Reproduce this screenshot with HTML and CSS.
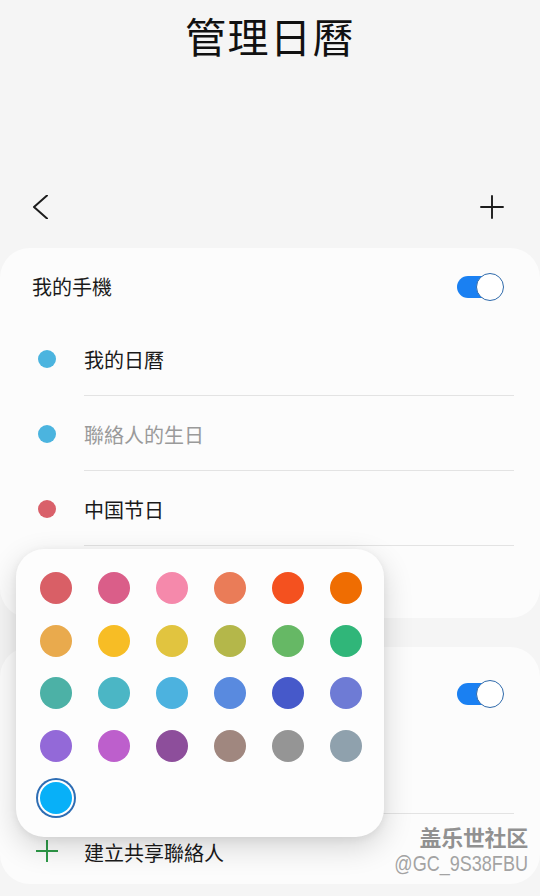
FILE: index.html
```html
<!DOCTYPE html>
<html lang="zh-Hant">
<head>
<meta charset="utf-8">
<title>管理日曆</title>
<link rel="stylesheet" href="styles.css">
</head>
<body>
<div class="screen">
  <header class="title-area">
    <h1 class="title">管理日曆</h1>
  </header>
  <nav class="toolbar">
    <svg class="icon" viewBox="0 0 24 24" width="24" height="24"><path d="M19 0.5 L6 12 L19 23.5" fill="none" stroke="#1c1c1c" stroke-width="2" stroke-linecap="round" stroke-linejoin="round"/></svg>
    <svg class="icon" viewBox="0 0 24 24" width="24" height="24"><path d="M12 1 V23 M1 12 H23" fill="none" stroke="#1c1c1c" stroke-width="1.9" stroke-linecap="round"/></svg>
  </nav>

  <section class="card card-phone">
    <div class="card-head">
      <span class="head-label">我的手機</span>
      <span class="switch"><span class="knob"></span></span>
    </div>
    <div class="row">
      <span class="dot-cell"><span class="dot dot-blue"></span></span>
      <span class="row-text">我的日曆</span>
    </div>
    <div class="row">
      <span class="dot-cell"><span class="dot dot-blue"></span></span>
      <span class="row-text muted">聯絡人的生日</span>
    </div>
    <div class="row">
      <span class="dot-cell"><span class="dot dot-red"></span></span>
      <span class="row-text">中国节日</span>
    </div>
  </section>

  <section class="card card-shared">
    <div class="card-head head-tall">
      <span class="head-label"></span>
      <span class="switch"><span class="knob"></span></span>
    </div>
    <div class="row row-blank">
      <span class="dot-cell"></span>
      <span class="row-text"></span>
    </div>
    <div class="row row-last">
      <span class="dot-cell">
        <svg viewBox="0 0 24 24" width="24" height="24"><path d="M12 1 V23 M1 12 H23" fill="none" stroke="#2e9a48" stroke-width="2"/></svg>
      </span>
      <span class="row-text no-line">建立共享聯絡人</span>
    </div>
  </section>

  <div class="palette">
    <span class="swatch" style="background:#d95f66"></span>
    <span class="swatch" style="background:#da5e89"></span>
    <span class="swatch" style="background:#f589ab"></span>
    <span class="swatch" style="background:#ea7c58"></span>
    <span class="swatch" style="background:#f4511f"></span>
    <span class="swatch" style="background:#ef6d02"></span>

    <span class="swatch" style="background:#e9aa4d"></span>
    <span class="swatch" style="background:#f7bd25"></span>
    <span class="swatch" style="background:#e1c43f"></span>
    <span class="swatch" style="background:#b4b74a"></span>
    <span class="swatch" style="background:#66b865"></span>
    <span class="swatch" style="background:#30b679"></span>

    <span class="swatch" style="background:#4cb1a6"></span>
    <span class="swatch" style="background:#4bb6c5"></span>
    <span class="swatch" style="background:#4cb2df"></span>
    <span class="swatch" style="background:#598adf"></span>
    <span class="swatch" style="background:#4659ca"></span>
    <span class="swatch" style="background:#6e7bd5"></span>

    <span class="swatch" style="background:#9369d8"></span>
    <span class="swatch" style="background:#bd5fcc"></span>
    <span class="swatch" style="background:#8d4e9b"></span>
    <span class="swatch" style="background:#a0877f"></span>
    <span class="swatch" style="background:#959595"></span>
    <span class="swatch" style="background:#8fa1ad"></span>

    <span class="swatch selected" style="background:#08b0f8"></span>
  </div>

  <div class="watermark">
    <div class="wm-brand">盖乐世社区</div>
    <div class="wm-id"><span class="wm-id-text">@GC_9S38FBU</span></div>
  </div>
</div>
</body>
</html>
```

FILE: styles.css
```css
* { box-sizing: border-box; }

html, body {
  margin: 0;
  padding: 0;
  background: #f5f5f5;
}

body {
  font-family: "Noto Sans CJK TC", "Noto Sans CJK SC", "Noto Sans", sans-serif;
  color: #1a1a1a;
}

.screen {
  position: relative;
  width: 540px;
  height: 896px;
  overflow: hidden;
}

.title-area {
  height: 179px;
  display: flex;
  justify-content: center;
  align-items: flex-start;
}

.title {
  margin: 0;
  font-size: 41px;
  font-weight: 400;
  line-height: 70px;
  letter-spacing: 1.5px;
  color: #111;
}

.toolbar {
  height: 56px;
  display: flex;
  justify-content: space-between;
  align-items: center;
  padding: 0 36px 0 28px;
}

.icon { display: block; }

.card {
  background: #fcfcfc;
  border-radius: 30px;
}

.card-phone {
  margin-top: 13px;
  height: 370px;
}

.card-shared {
  margin-top: 29px;
  height: 237px;
}

.card-head {
  height: 73px;
  padding: 4px 36px 0 32px;
  display: flex;
  justify-content: space-between;
  align-items: center;
}

.head-tall {
  height: 93px;
  padding-top: 0;
}

.head-label {
  font-size: 20px;
  color: #1a1a1a;
}

.switch {
  position: relative;
  width: 47px;
  height: 28px;
  display: flex;
  align-items: center;
}

.switch::before {
  content: "";
  width: 44px;
  height: 22px;
  border-radius: 11px;
  background: #1a80f2;
}

.knob {
  position: absolute;
  right: 0;
  top: 0;
  width: 28px;
  height: 28px;
  border-radius: 50%;
  background: #fff;
  border: 1.5px solid #2f6aab;
}

.row {
  height: 75px;
  display: flex;
  align-items: stretch;
}

.row-blank { height: 74px; }

.row-last {
  height: 70px;
  padding-top: 4px;
}

.dot-cell {
  width: 84px;
  display: flex;
  align-items: center;
  justify-content: center;
  padding-left: 10px;
}

.dot {
  width: 18px;
  height: 18px;
  border-radius: 50%;
}

.dot-blue { background: #4bb4df; }
.dot-red { background: #d9606a; }

.row-text {
  flex: 1;
  margin-right: 26px;
  display: flex;
  align-items: center;
  padding-top: 2px;
  font-size: 20px;
  color: #1a1a1a;
  border-bottom: 1px solid #e3e3e3;
}

.row-text.muted { color: #9a9a9a; }
.row-text.no-line { border-bottom: none; }

.palette {
  position: absolute;
  left: 16px;
  top: 549px;
  width: 368px;
  height: 288px;
  background: #fdfdfd;
  border-radius: 28px;
  box-shadow: 0 10px 30px rgba(0, 0, 0, 0.16), 0 2px 8px rgba(0, 0, 0, 0.06);
  padding: 23px 24px;
  display: grid;
  grid-template-columns: repeat(6, 32px);
  grid-auto-rows: 32px;
  column-gap: 26px;
  row-gap: 20.5px;
  align-content: start;
}

.swatch {
  width: 32px;
  height: 32px;
  border-radius: 50%;
}

.swatch.selected {
  box-shadow: 0 0 0 2px #ffffff, 0 0 0 4px #2d6db4;
}

.watermark {
  position: absolute;
  right: 12px;
  top: 821px;
  text-align: right;
  color: #919191;
  text-shadow: 0 0 2px #fff;
}

.wm-brand {
  font-family: "Noto Sans CJK SC", sans-serif;
  font-size: 22px;
  font-weight: 700;
  line-height: 30px;
  letter-spacing: -0.3px;
}

.wm-id {
  font-family: "Liberation Sans", Arial, sans-serif;
  font-size: 22px;
  line-height: 26px;
  color: #a3a3a3;
}

.wm-id-text {
  display: inline-block;
  transform: scaleX(0.82);
  transform-origin: right center;
}
```
